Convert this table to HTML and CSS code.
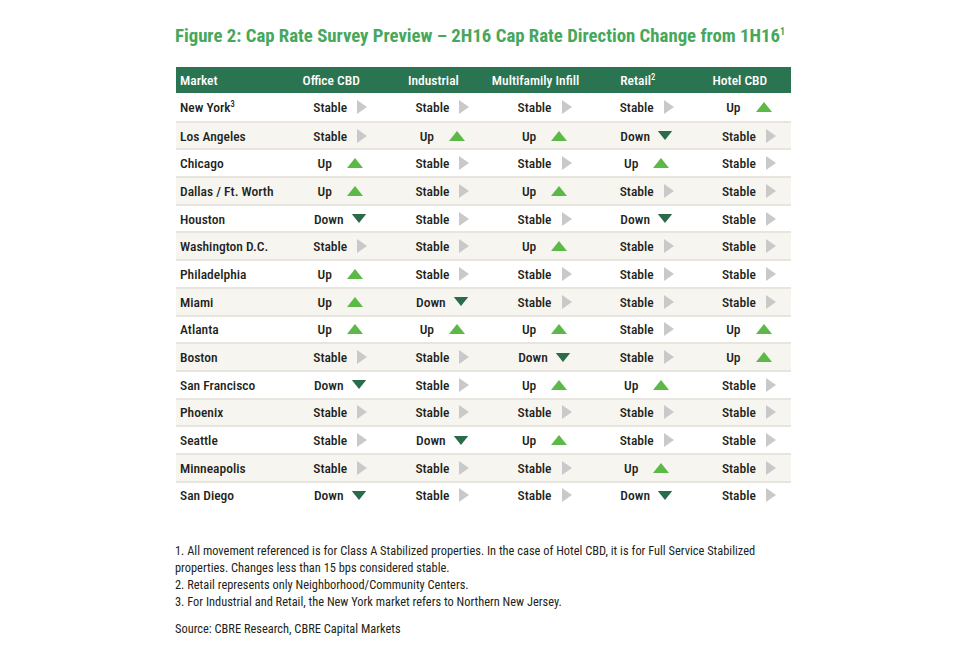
FILE: index.html
```html
<!DOCTYPE html>
<html lang="en">
<head>
<meta charset="utf-8">
<title>Cap Rate Survey Preview</title>
<link rel="stylesheet" href="styles.css">
</head>
<body>
<div class="page">
  <h1 class="title">Figure 2: Cap Rate Survey Preview – 2H16 Cap Rate Direction Change from 1H16<sup>1</sup></h1>
  <table class="grid">
    <thead>
      <tr><th class="mk">Market</th><th>Office CBD</th><th>Industrial</th><th>Multifamily Infill</th><th>Retail<sup>2</sup></th><th>Hotel CBD</th></tr>
    </thead>
    <tbody id="rows"></tbody>
  </table>
  <div class="notes">
    <p>1. All movement referenced is for Class A Stabilized properties. In the case of Hotel CBD, it is for Full Service Stabilized<br>properties. Changes less than 15 bps considered stable.</p>
    <p>2. Retail represents only Neighborhood/Community Centers.</p>
    <p>3. For Industrial and Retail, the New York market refers to Northern New Jersey.</p>
    <p class="src">Source: CBRE Research, CBRE Capital Markets</p>
  </div>
</div>
<script src="app.js"></script>
</body>
</html>
```
FILE: app.js
```js
const data = [
  ["New York<sup>3</sup>", "S","S","S","S","U"],
  ["Los Angeles", "S","U","U","D","S"],
  ["Chicago", "U","S","S","U","S"],
  ["Dallas / Ft. Worth", "U","S","U","S","S"],
  ["Houston", "D","S","S","D","S"],
  ["Washington D.C.", "S","S","U","S","S"],
  ["Philadelphia", "U","S","S","S","S"],
  ["Miami", "U","D","S","S","S"],
  ["Atlanta", "U","U","U","S","U"],
  ["Boston", "S","S","D","S","U"],
  ["San Francisco", "D","S","U","U","S"],
  ["Phoenix", "S","S","S","S","S"],
  ["Seattle", "S","D","U","S","S"],
  ["Minneapolis", "S","S","S","U","S"],
  ["San Diego", "D","S","S","D","S"]
];
const label = {S:"Stable", U:"Up", D:"Down"};
const icon = {
  S:'<svg class="ic ic-s" viewBox="0 0 10 14"><polygon points="0,0 10,7 0,14"/></svg>',
  U:'<svg class="ic ic-u" viewBox="0 0 16 10"><polygon points="8,0 16,10 0,10"/></svg>',
  D:'<svg class="ic ic-d" viewBox="0 0 16 10"><polygon points="0,0 16,0 8,10"/></svg>'
};
const tb = document.getElementById("rows");
tb.innerHTML = data.map(r =>
  '<tr><td class="mk">' + r[0] + '</td>' +
  r.slice(1).map(v => '<td><span class="val v-' + v + '"><span class="lbl">' + label[v] + '</span>' + icon[v] + '</span></td>').join('') +
  '</tr>'
).join('');
```
FILE: styles.css
```css
html, body { margin: 0; padding: 0; background: #fff; }
body {
  font-family: "Roboto", "Liberation Sans", sans-serif;
  font-stretch: 75%;
  color: #231f20;
}
.page { padding: 24px 0 0 175px; width: 640px; }
.title {
  margin: 0 0 19px 0;
  font-size: 18.8px;
  font-weight: 700;
  color: #47a75b;
  white-space: nowrap;
  line-height: 24px;
}
.title sup { font-size: 10px; vertical-align: 7px; line-height: 0; }
sup { font-size: 8.5px; vertical-align: 5px; line-height: 0; }
.grid {
  border-collapse: collapse;
  width: 615px;
  margin-left: 1px;
  table-layout: fixed;
  font-size: 13.5px;
  font-weight: 500;
}
.grid th {
  background: #2b7451;
  color: #fff;
  font-weight: 500;
  height: 26px;
  padding: 0;
  text-align: center;
  width: 102px;
  white-space: nowrap;
}
.grid th.mk { width: 104px; text-align: left; padding-left: 4px; box-sizing: border-box; }
.grid td {
  height: 25.7px;
  padding: 0;
  border-top: 2px solid #e7e5de;
  text-align: center;
  white-space: nowrap;
}
.grid tbody tr:first-child td { border-top: none; height: 27.7px; }
.grid tbody tr:nth-child(even) td { background: #f6f5f0; }
.grid td.mk { text-align: left; padding-left: 4px; }
.val { display: inline-flex; align-items: center; padding-left: 18px; }
.ic { display: block; }
.ic-s { width: 10px; height: 14px; fill: #c9c9c9; margin-left: 10px; }
.ic-u { width: 16px; height: 10px; fill: #5cb947; margin-left: 15px; }
.ic-d { width: 16px; height: 9px; fill: #2a6b4a; margin-left: 7px; }
.notes { margin-top: 34px; font-size: 12.4px; line-height: 17px; }
.notes p { margin: 0; }
.notes .src { margin-top: 10px; }
```
